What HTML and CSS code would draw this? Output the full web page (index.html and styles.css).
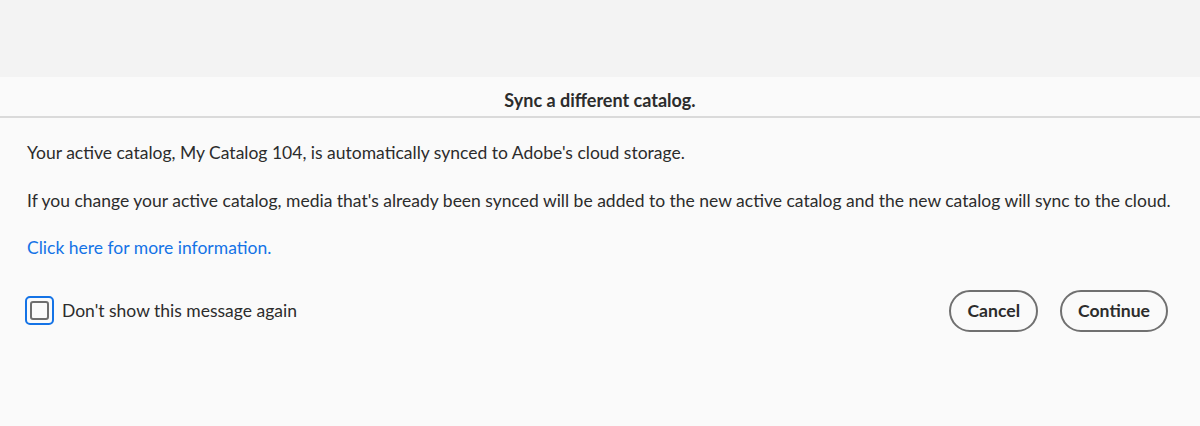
FILE: index.html
```html
<!DOCTYPE html>
<html>
<head>
<meta charset="utf-8">
<link rel="stylesheet" href="styles.css">
</head>
<body>
<div class="top"></div>
<div class="dialog">
  <div class="header">Sync a different catalog.</div>
  <div class="content">
    <p class="line">Your active catalog, My Catalog 104, is automatically synced to Adobe's cloud storage.</p>
    <p class="line">If you change your active catalog, media that's already been synced will be added to the new active catalog and the new catalog will sync to the cloud.</p>
    <p class="line link">Click here for more information.</p>
    <div class="footer">
      <label class="check">
        <span class="ring"><span class="box"></span></span>
        <span class="check-label">Don't show this message again</span>
      </label>
      <div class="buttons">
        <button class="btn">Cancel</button>
        <button class="btn">Continue</button>
      </div>
    </div>
  </div>
</div>
</body>
</html>
```
FILE: styles.css
```css
html, body {
  margin: 0;
  padding: 0;
  background: #fafafa;
  font-family: Lato, "Open Sans", sans-serif;
  color: #2c2c2c;
}
.top {
  height: 77px;
  background: #f3f3f3;
}
.dialog {
  background: #fafafa;
}
.header {
  height: 39px;
  line-height: 46px;
  text-align: center;
  font-weight: 700;
  font-size: 18px;
  border-bottom: 2px solid #dadada;
}
.content {
  padding: 0 27px;
}
.line {
  margin: 0;
  font-size: 17.5px;
  line-height: 47.5px;
  white-space: nowrap;
}
.line:first-child {
  margin-top: 11px;
}
.link {
  color: #1473e6;
}
.footer {
  display: flex;
  align-items: center;
  justify-content: space-between;
  margin-top: 18px;
}
.check {
  display: flex;
  align-items: center;
  gap: 8px;
  margin-left: -2px;
}
.ring {
  width: 25px;
  height: 25px;
  border: 2px solid #1473e6;
  border-radius: 5px;
  display: flex;
  align-items: center;
  justify-content: center;
}
.box {
  width: 15px;
  height: 15px;
  border: 2px solid #6e6e6e;
  border-radius: 3px;
}
.check-label {
  font-size: 17.5px;
}
.buttons {
  display: flex;
  gap: 22px;
  margin-right: 5px;
}
.btn {
  height: 42px;
  padding: 0 16px;
  border: 2px solid #707070;
  border-radius: 21px;
  background: transparent;
  font-family: inherit;
  font-weight: 700;
  font-size: 17.6px;
  color: #2c2c2c;
}
```
